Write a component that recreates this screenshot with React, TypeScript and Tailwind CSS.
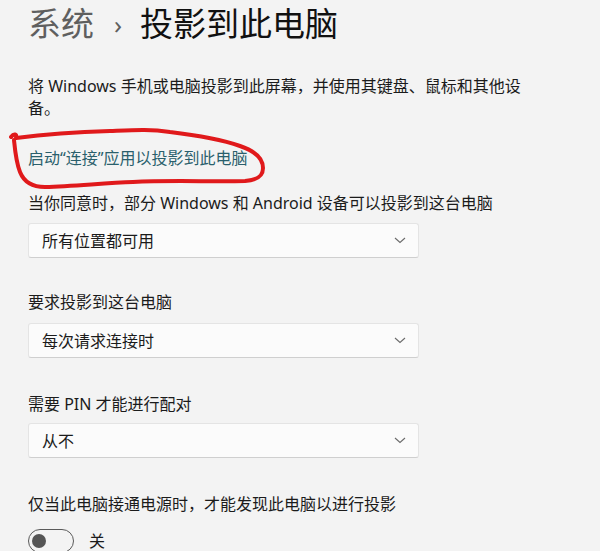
import React from 'react';

const font = { fontFamily: '"Noto Sans", "Noto Sans CJK SC", sans-serif' };

interface DropdownProps {
  value: string;
}

const Dropdown: React.FC<DropdownProps> = ({ value }) => (
  <div className="flex h-[35px] w-[391px] items-center justify-between rounded-[3px] border border-[#e4e4e4] border-b-[#cfcfcf] bg-[#fbfbfb] pl-[13px] pr-[12px]">
    <span className="text-[16px] leading-none text-[#1b1b1b]">{value}</span>
    <svg width="12" height="7" viewBox="0 0 12 7" fill="none">
      <path d="M1 1l5 4.5L11 1" stroke="#6b6b6b" strokeWidth="1.1" />
    </svg>
  </div>
);

const App: React.FC = () => {
  return (
    <div className="relative h-[551px] w-[600px] overflow-hidden bg-[#f3f3f3] pl-[28px] text-[#1b1b1b]" style={font}>
      {/* header */}
      <div className="flex h-[48px] items-center text-[33px] leading-[48px]">
        <span className="text-[#5f5f5f]">系统</span>
        <span className="ml-[20px] mr-[18px] text-[26px] text-[#5f5f5f]">›</span>
        <span className="text-[#111]">投影到此电脑</span>
      </div>

      <p className="mt-[27px] text-[16px] leading-[22px]">
        将 Windows 手机或电脑投影到此屏幕，并使用其键盘、鼠标和其他设
        <br />
        备。
      </p>

      <div className="mt-[28px] text-[16px] leading-[22px] text-[#2a5f6c]">启动“连接”应用以投影到此电脑</div>

      <div className="mt-[23px] text-[16px] leading-[22px]">当你同意时，部分 Windows 和 Android 设备可以投影到这台电脑</div>
      <div className="mt-[9px]">
        <Dropdown value="所有位置都可用" />
      </div>

      <div className="mt-[33px] text-[16px] leading-[22px]">要求投影到这台电脑</div>
      <div className="mt-[10px]">
        <Dropdown value="每次请求连接时" />
      </div>

      <div className="mt-[35px] text-[16px] leading-[22px]">需要 PIN 才能进行配对</div>
      <div className="mt-[8px]">
        <Dropdown value="从不" />
      </div>

      <div className="mt-[35px] text-[16px] leading-[22px]">仅当此电脑接通电源时，才能发现此电脑以进行投影</div>
      <div className="mt-[14px] flex items-center">
        <div className="flex h-[24px] w-[46px] items-center rounded-full border-[1.5px] border-[#5a5a5a] pl-[3px]">
          <div className="h-[14px] w-[14px] rounded-full bg-[#555]" />
        </div>
        <span className="ml-[15px] text-[16px]">关</span>
      </div>

      {/* red annotation */}
      <svg className="pointer-events-none absolute left-0 top-0" width="600" height="551" viewBox="0 0 600 551" fill="none">
        <path
          d="M11 137 C14 133 17 134 16 138 C40 135 80 132 110 131 C135 130 150 129 170 132 C195 135 220 139 240 146 C255 151 263 158 263 168 C263 176 258 180 245 181 C215 182 170 180 133 182 C105 183 75 186 45 187 C32 187 24 182 20 172 C16 162 15 150 14 140"
          stroke="#e0191b"
          strokeWidth="4"
          strokeLinecap="round"
          strokeLinejoin="round"
        />
      </svg>
    </div>
  );
};

export default App;
